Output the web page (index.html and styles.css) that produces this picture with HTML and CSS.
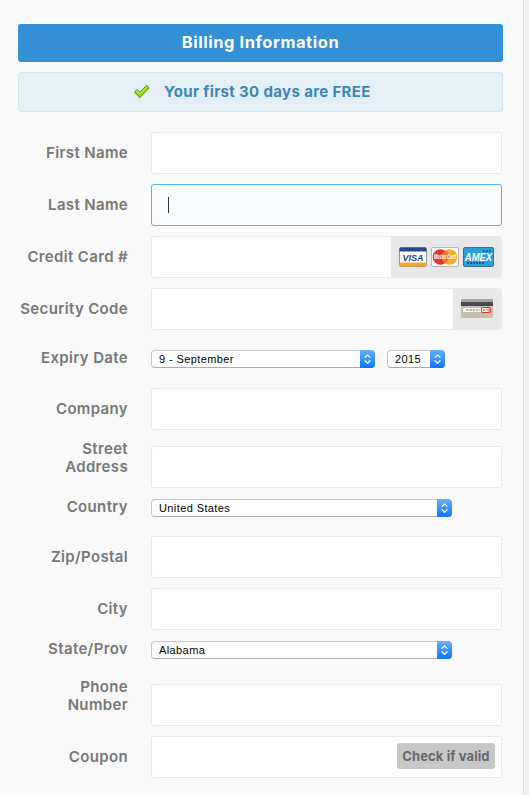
FILE: index.html
```
<!DOCTYPE html>
<html lang="en">
<head>
    <meta charset="UTF-8">
    <meta name="viewport" content="width=device-width, initial-scale=1.0">
    <title>Billing Information</title>
    <link rel="stylesheet" href="styles.css">
</head>
<body>
    <svg width="0" height="0" class="defs">
        <symbol id="arrows" viewBox="0 0 15 18">
            <path d="M5 7.4 L7.5 4.9 L10 7.4 M5 10.8 L7.5 13.3 L10 10.8" fill="none" stroke="#fff" stroke-width="1.3" stroke-linecap="round" stroke-linejoin="round"/>
        </symbol>
    </svg>

    <div class="panel">
        <h1 class="title">Billing Information</h1>
        <div class="notice">
            <svg class="check" width="18" height="16" viewBox="0 0 18 16">
                <path d="M1.5 8 L4 5.6 L6.8 8.2 L13.8 1.5 L16.3 3.8 L6.8 13.8 Z" fill="#93d50e" stroke="#5c8a1c" stroke-width="1" stroke-linejoin="round"/>
                <path d="M3 7.8 L4.1 6.9 L6.9 9.6 L13.9 3" fill="none" stroke="#c9f25c" stroke-width="1"/>
            </svg>
            <span class="notice-text">Your first 30 days are FREE</span>
        </div>

        <form class="billing-form">
            <div class="row">
                <label for="firstName">First Name</label>
                <div class="field"><input type="text" id="firstName"></div>
            </div>
            <div class="row">
                <label for="lastName">Last Name</label>
                <div class="field active"><input type="text" id="lastName"><span class="caret"></span></div>
            </div>
            <div class="row">
                <label for="cardNumber">Credit Card #</label>
                <div class="field">
                    <input type="text" id="cardNumber">
                    <div class="addon cards">
                        <svg width="28" height="21" viewBox="0 0 28 21">
                            <rect x=".5" y=".5" width="27" height="19" rx="1.5" fill="#fff" stroke="#8d929c"/>
                            <path d="M.5 4.5 V2 Q.5 .5 2 .5 H26 Q27.5 .5 27.5 2 V4.5 Z" fill="#27488e"/>
                            <path d="M.5 15.5 H27.5 V18 Q27.5 19.5 26 19.5 H2 Q.5 19.5 .5 18 Z" fill="#f3a62c"/>
                            <text x="14" y="13.5" text-anchor="middle" class="visa">VISA</text>
                        </svg>
                        <svg width="28" height="21" viewBox="0 0 28 21">
                            <rect x=".5" y=".5" width="27" height="19" rx="1.5" fill="#fff" stroke="#b5b5b5"/>
                            <circle cx="18.5" cy="10" r="7.8" fill="#f7a823"/>
                            <circle cx="9.5" cy="10" r="7.8" fill="#e0372b"/>
                            <path d="M14 3.7 A7.8 7.8 0 0 1 14 16.3 A7.8 7.8 0 0 1 14 3.7" fill="#ee7628"/>
                            <text transform="translate(14 12.3) scale(1 1.6)" text-anchor="middle" class="mastercard">MasterCard</text>
                        </svg>
                        <svg width="31" height="21" viewBox="0 0 31 21">
                            <rect x=".5" y=".5" width="30" height="19" rx="1.5" fill="#2a9fdc" stroke="#34708f"/>
                            <path d="M20 4 H29" stroke="#125f9e" stroke-width="1.5" stroke-dasharray="2 1"/>
                            <path d="M4 16 H22" stroke="#125f9e" stroke-width="2.2" stroke-dasharray="2 1"/>
                            <text transform="translate(15.5 13.5) scale(1 1.15)" text-anchor="middle" class="amex">AMEX</text>
                        </svg>
                    </div>
                </div>
            </div>
            <div class="row">
                <label for="securityCode">Security Code</label>
                <div class="field">
                    <input type="text" id="securityCode">
                    <div class="addon cvv">
                        <svg width="32" height="20" viewBox="0 0 32 20">
                            <rect width="32" height="19" rx="1.5" fill="#c9bda9"/>
                            <path d="M0 3 V1.5 Q0 0 1.5 0 H30.5 Q32 0 32 1.5 V3 Z" fill="#aaa69f"/>
                            <rect y="3" width="32" height="4" fill="#494551"/>
                            <rect x="2" y="9" width="25" height="4" fill="#fff"/>
                            <path d="M5 11 H19 M22 11 H28" stroke="#9b9ba0" stroke-width="1.3" stroke-dasharray="2.5 .8"/>
                            <rect x="20.5" y="8.5" width="9" height="5" rx="1.5" fill="none" stroke="#e2362f" stroke-width="1.2"/>
                        </svg>
                    </div>
                </div>
            </div>
            <div class="row expiry-row">
                <label for="month">Expiry Date</label>
                <div class="select month">
                    <select id="month"><option>9 - September</option></select>
                    <svg class="arrows"><use href="#arrows"/></svg>
                </div>
                <div class="select year">
                    <select><option>2015</option></select>
                    <svg class="arrows"><use href="#arrows"/></svg>
                </div>
            </div>
            <div class="row">
                <label for="company">Company</label>
                <div class="field"><input type="text" id="company"></div>
            </div>
            <div class="row two-line">
                <label for="street">Street<br>Address</label>
                <div class="field"><input type="text" id="street"></div>
            </div>
            <div class="row select-row">
                <label for="country">Country</label>
                <div class="select">
                    <select id="country"><option>United States</option></select>
                    <svg class="arrows"><use href="#arrows"/></svg>
                </div>
            </div>
            <div class="row">
                <label for="zip">Zip/Postal</label>
                <div class="field"><input type="text" id="zip"></div>
            </div>
            <div class="row">
                <label for="city">City</label>
                <div class="field"><input type="text" id="city"></div>
            </div>
            <div class="row select-row">
                <label for="state">State/Prov</label>
                <div class="select">
                    <select id="state"><option>Alabama</option></select>
                    <svg class="arrows"><use href="#arrows"/></svg>
                </div>
            </div>
            <div class="row two-line">
                <label for="phone">Phone<br>Number</label>
                <div class="field"><input type="text" id="phone"></div>
            </div>
            <div class="row">
                <label for="coupon">Coupon</label>
                <div class="field">
                    <input type="text" id="coupon">
                    <button type="button" class="check-button">Check if valid</button>
                </div>
            </div>
        </form>
    </div>
</body>
</html>
```
FILE: styles.css
```
* {
    box-sizing: border-box;
}

body {
    margin: 0;
    font-family: Inter, "Liberation Sans", sans-serif;
    background-color: #f1f1f1;
    background-image: radial-gradient(#eaeaea 30%, transparent 32%);
    background-size: 3px 3px;
    overflow: hidden;
}

.defs {
    display: none;
}

.panel {
    width: 524px;
    height: 795px;
    padding: 24px 20px 0 18px;
    background-color: #f9f9f9;
    border-right: 1px solid #ddd;
}

.title {
    width: 485px;
    height: 38px;
    margin: 0 0 10px;
    line-height: 37px;
    font-size: 16.5px;
    font-weight: 700;
    letter-spacing: 0.55px;
    text-align: center;
    color: #fff;
    background-color: #338fd6;
    border-radius: 3px;
}

.notice {
    display: flex;
    align-items: center;
    width: 485px;
    height: 40px;
    margin-bottom: 20px;
    padding-left: 114px;
    background-color: #e5f0f6;
    border: 1px solid #cde5f0;
    border-radius: 3px;
}

.notice-text {
    margin-left: 13px;
    font-size: 15px;
    font-weight: 700;
    line-height: 18px;
    letter-spacing: 0.35px;
    padding-bottom: 1px;
    white-space: nowrap;
    color: #3d87b3;
}

.billing-form {
    display: flex;
    flex-direction: column;
    gap: 10px;
}

.row {
    display: flex;
    align-items: center;
    height: 42px;
}

label {
    width: 110px;
    margin-right: 23px;
    font-size: 15px;
    font-weight: 600;
    line-height: 18px;
    letter-spacing: 0.35px;
    text-align: right;
    white-space: nowrap;
    color: #777;
}

.field {
    position: relative;
    display: flex;
    align-items: center;
    width: 351px;
    height: 42px;
    background-color: #fff;
    border: 1px solid #e8e8e8;
    border-radius: 3px;
    overflow: hidden;
}

.field input {
    flex: 1;
    min-width: 0;
    height: 40px;
    padding: 0 16px;
    font-size: 15px;
    background: transparent;
    border: none;
    outline: none;
}

.field.active {
    background-color: #f8fcff;
    border-color: #4eb1f5;
}

.caret {
    position: absolute;
    left: 16px;
    top: 12px;
    width: 1px;
    height: 16px;
    background-color: #333;
}

.addon {
    display: flex;
    align-items: center;
    height: 40px;
    background-color: #e8e8e8;
}

.cards {
    width: 110px;
    gap: 4px;
    padding-left: 8px;
}

.cvv {
    width: 48px;
    padding-left: 8px;
}

.visa, .mastercard, .amex {
    font-family: "Liberation Sans", Arial, sans-serif;
    font-style: italic;
    font-weight: bold;
    fill: #fff;
}

.visa {
    font-size: 9px;
    fill: #213f83;
}

.mastercard {
    font-size: 4px;
}

.amex {
    font-size: 9.5px;
}

/* selects */
.expiry-row {
    height: 38px;
    align-items: flex-start;
    padding-top: 9px;
}

.select-row {
    height: 28px;
    align-items: flex-start;
}

.select {
    display: flex;
    width: 301px;
    height: 18px;
    margin-top: 1px;
    background-color: #fff;
    border: 1px solid #c6c6c6;
    border-bottom-color: #adadad;
    border-right: none;
    border-radius: 4px;
}

.select.month {
    width: 224px;
    margin-right: 12px;
}

.select.year {
    width: 58px;
}

.select select {
    flex: 1;
    min-width: 0;
    height: 16px;
    padding: 0 0 0 7px;
    font-family: "Liberation Sans", Arial, sans-serif;
    font-size: 11px;
    line-height: 16px;
    letter-spacing: 0.4px;
    color: #000;
    background: transparent;
    border: none;
    outline: none;
    appearance: none;
}

.arrows {
    flex: none;
    width: 15px;
    height: 18px;
    margin-top: -1px;
    background: linear-gradient(#66b2fa, #0d74fb);
    border-radius: 0 4px 4px 0;
}

.two-line {
    height: 48px;
    align-items: flex-start;
}

.two-line .field {
    align-self: flex-end;
}

.check-button {
    width: 98px;
    height: 26px;
    margin: 0 6px 2px 0;
    padding: 0;
    font-family: inherit;
    font-size: 13px;
    font-weight: 700;
    letter-spacing: 0.1px;
    white-space: nowrap;
    color: #65666c;
    background-color: #c8c8c8;
    border: none;
    border-radius: 3px;
}
```
